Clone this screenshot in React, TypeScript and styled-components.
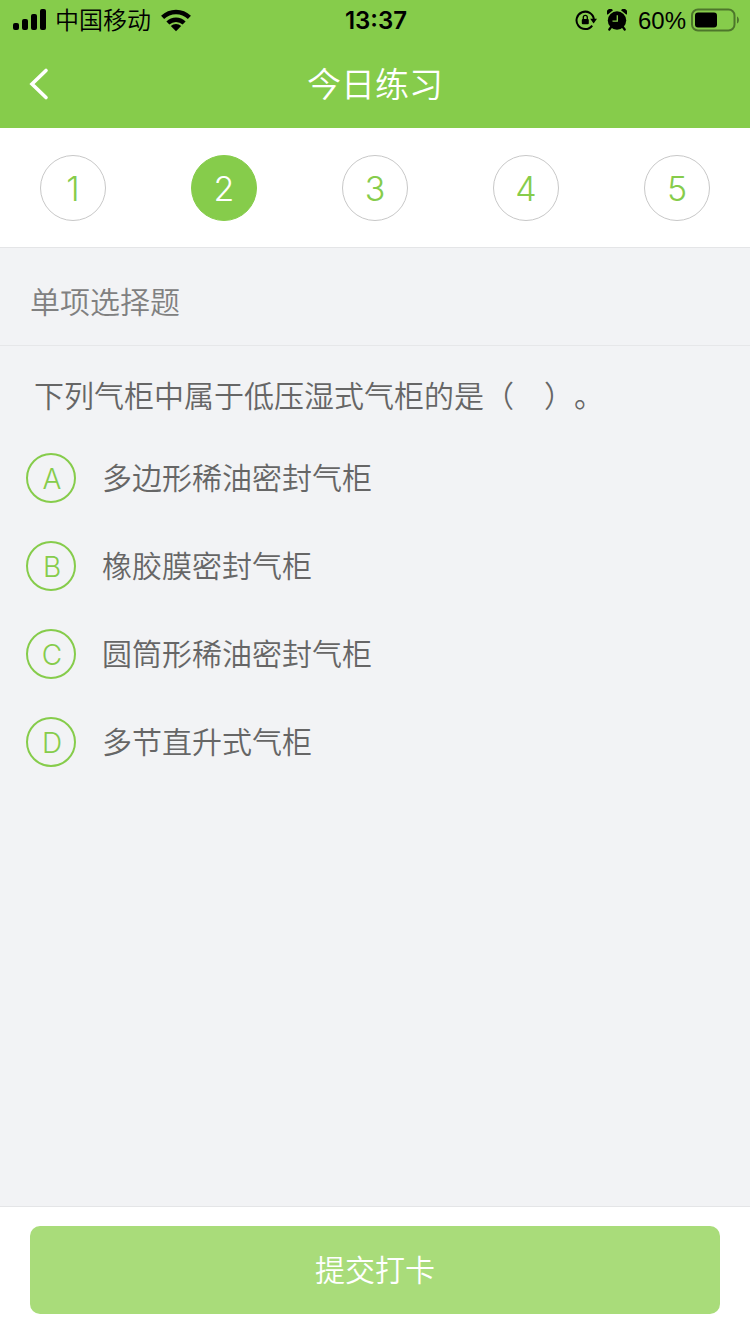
import React, { useState } from "react";
import styled, { createGlobalStyle } from "styled-components";

const GREEN = "#86cc4b";

const GlobalStyle = createGlobalStyle`
  *, *::before, *::after { box-sizing: border-box; }
  body {
    margin: 0;
    background: #f2f3f5;
    font-family: Inter, "Noto Sans CJK SC", sans-serif;
    font-weight: 350;
    color: #666;
  }
  button, input { font: inherit; margin: 0; }
`;

const Screen = styled.div`
  display: flex;
  flex-direction: column;
  min-height: 100vh;
`;

const StatusBar = styled.div`
  display: grid;
  grid-template-columns: 1fr auto 1fr;
  align-items: center;
  height: 40px;
  padding: 0 10px 0 12px;
  background: ${GREEN};
  color: #000;
  font-size: 24px;
  line-height: 38px;
`;

const StatusGroup = styled.div<{ $end?: boolean }>`
  display: flex;
  align-items: center;
  justify-content: ${(p) => (p.$end ? "flex-end" : "flex-start")};
  gap: ${(p) => (p.$end ? "5px" : "9px")};
`;

const IconPair = styled.span`
  display: flex;
  align-items: center;
  gap: 10px;
  margin-right: 6px;
`;

const Carrier = styled.span`
  padding-top: 2px;
`;

const Percent = styled.span`
  padding-top: 2px;
  font-family: "Liberation Sans", sans-serif;
  font-weight: 400;
`;

const Clock = styled.time`
  padding-top: 2px;
  font-weight: 600;
`;

const NavBar = styled.header`
  display: grid;
  grid-template-columns: 80px 1fr 80px;
  align-items: center;
  height: 88px;
  background: ${GREEN};
  color: #fff;
`;

const BackButton = styled.button`
  display: flex;
  align-items: center;
  height: 88px;
  padding: 0 0 0 28px;
  border: 0;
  background: none;
  color: inherit;
  cursor: pointer;
`;

const Title = styled.h1`
  margin: 0;
  padding-top: 2px;
  font-size: 34px;
  line-height: 48px;
  font-weight: 350;
  text-align: center;
`;

const Steps = styled.nav`
  display: flex;
  align-items: center;
  justify-content: space-between;
  height: 120px;
  padding: 0 40px;
  background: #fff;
  border-bottom: 1px solid #e4e5e7;
`;

const Step = styled.button<{ $active: boolean }>`
  width: 66px;
  height: 66px;
  padding: 2px 0 0;
  border: 1px solid ${(p) => (p.$active ? GREEN : "#c8c8c8")};
  border-radius: 50%;
  background: ${(p) => (p.$active ? GREEN : "#fff")};
  color: ${(p) => (p.$active ? "#fff" : GREEN)};
  font-size: 34px;
  line-height: 62px;
  cursor: pointer;
`;

const SectionTitle = styled.h2`
  margin: 0;
  padding: 32px 30px 21px;
  border-bottom: 1px solid #e6e7e9;
  color: #808080;
  font-size: 30px;
  line-height: 44px;
  font-weight: 350;
`;

const Question = styled.fieldset`
  flex: 1;
  min-width: 0;
  margin: 0;
  padding: 28px 26px;
  border: 0;
`;

const Prompt = styled.legend`
  float: left;
  width: 100%;
  padding: 0 8px;
  margin-bottom: 16px;
  font-size: 30px;
  line-height: 44px;
  text-spacing-trim: space-all;
`;

const Options = styled.div`
  clear: both;
`;

const Option = styled.label`
  display: flex;
  align-items: center;
  gap: 26px;
  min-height: 88px;
  font-size: 30px;
  line-height: 44px;
  cursor: pointer;
`;

const Marker = styled.span`
  display: grid;
  flex: none;
  place-items: center;
  width: 50px;
  height: 50px;
  color: ${GREEN};

  > * {
    grid-area: 1 / 1;
  }
`;

const Radio = styled.input`
  appearance: none;
  width: 50px;
  height: 50px;
  border: 2px solid ${GREEN};
  border-radius: 50%;
  cursor: pointer;

  &:checked {
    background: ${GREEN};
  }
  &:checked + span {
    color: #fff;
  }
`;

const Letter = styled.span`
  padding: 2px 0 0 2px;
  font-size: 28px;
  pointer-events: none;
`;

const Footer = styled.footer`
  padding: 19px 30px 20px;
  background: #fff;
  border-top: 1px solid #e4e5e7;
`;

const Submit = styled.button`
  display: block;
  width: 100%;
  height: 88px;
  padding: 0;
  border: 0;
  border-radius: 10px;
  background: #a9dc7a;
  color: #fff;
  font-size: 30px;
  line-height: 88px;
  cursor: pointer;
`;

const SignalIcon = () => (
  <svg width="34" height="22" viewBox="0 0 34 22" aria-hidden="true">
    <rect x="1" y="14" width="6" height="7" rx="2" />
    <rect x="10" y="10" width="6" height="11" rx="2" />
    <rect x="19" y="5" width="6" height="16" rx="2" />
    <rect x="28" y="0" width="6" height="21" rx="2" />
  </svg>
);

const WifiIcon = () => (
  <svg width="32" height="24" viewBox="0 0 32 24" fill="none" stroke="#000" strokeWidth="4.4" aria-hidden="true">
    <path d="M2.600 9.400a19.200 19.200 0 0 1 26.800 0" />
    <path d="M7.900 15a11.800 11.800 0 0 1 16.200 0" />
    <path d="M10.800 18a7.500 7.500 0 0 1 10.400 0L16 23.200z" fill="#000" stroke="none" />
  </svg>
);

const RotationLockIcon = () => (
  <svg width="22" height="22" viewBox="0 0 22 22" fill="none" aria-hidden="true">
    <path d="M17.200 16.600a8.700 8.700 0 1 1 1.700-6.100" stroke="#000" strokeWidth="2" />
    <path d="M15.200 9.800h6.800l-3.400 4.600z" fill="#000" />
    <rect x="6.800" y="9.900" width="7" height="5.400" rx="1" fill="#000" />
    <path d="M8.300 10V8.300a2 2 0 0 1 4 0V10" stroke="#000" strokeWidth="1.300" />
  </svg>
);

const AlarmIcon = () => (
  <svg width="20" height="22" viewBox="0 0 20 22" aria-hidden="true">
    <circle cx="10" cy="11.500" r="9.200" />
    <path d="M.5 5.800A3.400 3.400 0 0 1 6 1.200zM19.500 5.800A3.400 3.400 0 0 0 14 1.200z" />
    <path d="M4.500 17.500l-2.200 3M15.500 17.500l2.200 3" stroke="#000" strokeWidth="2.200" strokeLinecap="round" />
    <path d="M10.300 6.200v6H5.500" fill="none" stroke={GREEN} strokeWidth="1.300" />
  </svg>
);

const BatteryIcon = () => (
  <svg width="49" height="24" viewBox="0 0 49 24" aria-hidden="true">
    <rect x="1" y="1.500" width="42.500" height="21" rx="6" fill="none" stroke="#000" strokeOpacity=".42" strokeWidth="2" />
    <rect x="4" y="4.500" width="22" height="15" rx="3" />
    <path d="M46 8.500c2.600 1 2.600 6 0 7z" fillOpacity=".42" />
  </svg>
);

const BackIcon = () => (
  <svg width="22" height="34" viewBox="0 0 22 34" fill="none" stroke="currentColor" strokeWidth="3.600" strokeLinecap="round" aria-hidden="true">
    <path d="M18 3.500L4 17l14 13.500" />
  </svg>
);

const steps = [1, 2, 3, 4, 5];

const options = [
  { key: "A", text: "多边形稀油密封气柜" },
  { key: "B", text: "橡胶膜密封气柜" },
  { key: "C", text: "圆筒形稀油密封气柜" },
  { key: "D", text: "多节直升式气柜" },
];

export default function App() {
  const [current, setCurrent] = useState(2);
  const [answer, setAnswer] = useState("");

  return (
    <Screen lang="zh-CN">
      <GlobalStyle />
      <StatusBar>
        <StatusGroup>
          <SignalIcon />
          <Carrier>中国移动</Carrier>
          <WifiIcon />
        </StatusGroup>
        <Clock>13:37</Clock>
        <StatusGroup $end>
          <IconPair>
            <RotationLockIcon />
            <AlarmIcon />
          </IconPair>
          <Percent>60%</Percent>
          <BatteryIcon />
        </StatusGroup>
      </StatusBar>
      <NavBar>
        <BackButton type="button" aria-label="返回">
          <BackIcon />
        </BackButton>
        <Title>今日练习</Title>
      </NavBar>
      <Steps>
        {steps.map((n) => (
          <Step key={n} type="button" $active={n === current} onClick={() => setCurrent(n)}>
            {n}
          </Step>
        ))}
      </Steps>
      <SectionTitle>单项选择题</SectionTitle>
      <Question>
        <Prompt>下列气柜中属于低压湿式气柜的是（　）。</Prompt>
        <Options>
          {options.map((o) => (
            <Option key={o.key}>
              <Marker>
                <Radio
                  type="radio"
                  name="answer"
                  value={o.key}
                  checked={answer === o.key}
                  onChange={() => setAnswer(o.key)}
                />
                <Letter>{o.key}</Letter>
              </Marker>
              {o.text}
            </Option>
          ))}
        </Options>
      </Question>
      <Footer>
        <Submit type="button">提交打卡</Submit>
      </Footer>
    </Screen>
  );
}
